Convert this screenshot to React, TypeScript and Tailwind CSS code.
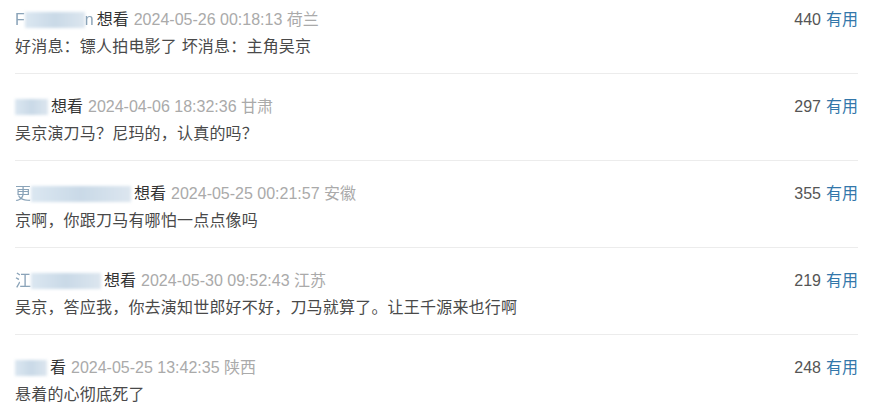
const comments = [
  { pre: "F", blur: 60, post: "n", vote: "想看", time: "2024-05-26 00:18:13", loc: "荷兰", text: "好消息：镖人拍电影了 坏消息：主角吴京", useful: 440 },
  { pre: "", blur: 33, post: "", vote: "想看", time: "2024-04-06 18:32:36", loc: "甘肃", text: "吴京演刀马？尼玛的，认真的吗？", useful: 297 },
  { pre: "更", blur: 100, post: "", vote: "想看", time: "2024-05-25 00:21:57", loc: "安徽", text: "京啊，你跟刀马有哪怕一点点像吗", useful: 355 },
  { pre: "江", blur: 70, post: "", vote: "想看", time: "2024-05-30 09:52:43", loc: "江苏", text: "吴京，答应我，你去演知世郎好不好，刀马就算了。让王千源来也行啊", useful: 219 },
  { pre: "", blur: 32, post: "", vote: "看", time: "2024-05-25 13:42:35", loc: "陕西", text: "悬着的心彻底死了", useful: 248 },
];

function BlurName({ pre, width, post }: { pre: string; width: number; post: string }) {
  return (
    <span className="inline-flex items-center">
      {pre && <span className="text-[#8aa3b8] blur-[0.6px]">{pre}</span>}
      <span
        className="inline-block h-[16px] bg-gradient-to-r from-[#dbe7f1] via-[#c9d9e7] to-[#dce6ef] blur-[1.5px]"
        style={{ width }}
      />
      {post && <span className="text-[#8aa3b8] blur-[0.6px]">{post}</span>}
    </span>
  );
}

export default function App() {
  return (
    <div
      className="w-[876px] h-[407px] overflow-hidden bg-white px-[15px] text-[16px] text-[#494949]"
      style={{ fontFamily: '"Liberation Sans", Arial, "Noto Sans CJK SC", sans-serif' }}
    >
      {comments.map((c, i) => (
        <div
          key={i}
          className={`mr-[3px] border-b border-[#ececec] pb-[15px] ${i === 0 ? "pt-[9px]" : "pt-[22px]"}`}
        >
          <div className="flex items-center justify-between leading-[22px]">
            <div className="flex items-center">
              <BlurName pre={c.pre} width={c.blur} post={c.post} />
              <span className="ml-[3px] text-[#333]">{c.vote}</span>
              <span className="ml-[5px] text-[#aaa]">
                {c.time} {c.loc}
              </span>
            </div>
            <div className="flex items-center">
              <span className="text-[#555]">{c.useful}</span>
              <span className="ml-[5px] text-[#37a]">有用</span>
            </div>
          </div>
          <p className="mt-[5px] leading-[22px] tracking-[0.2px]">{c.text}</p>
        </div>
      ))}
    </div>
  );
}
